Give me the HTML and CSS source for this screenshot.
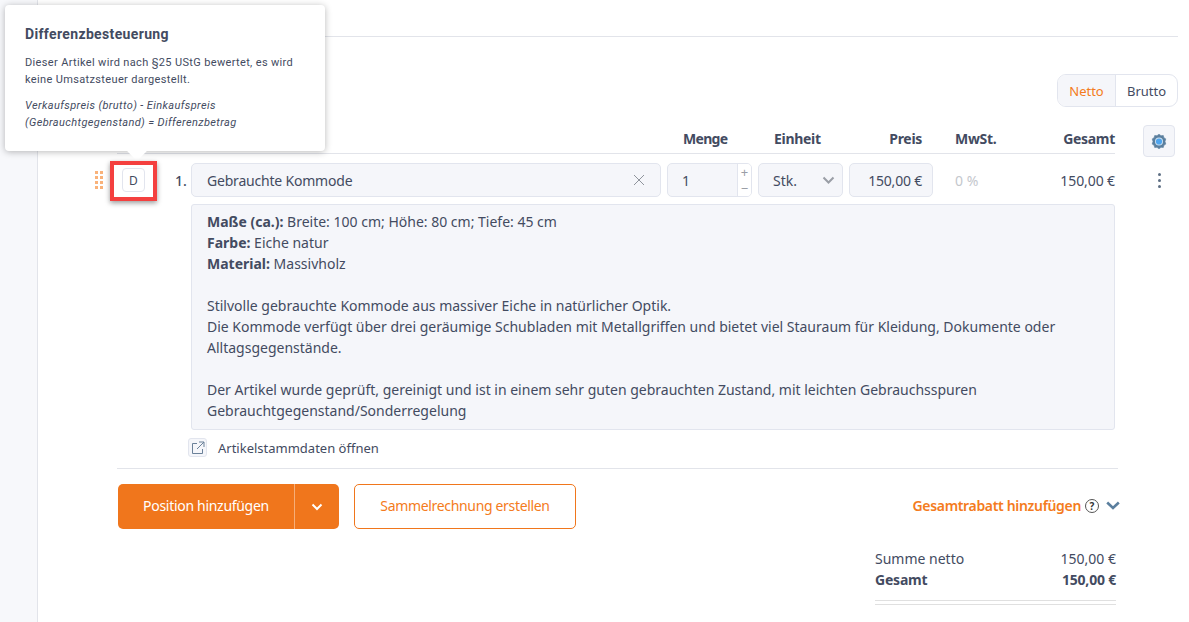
FILE: index.html
```html
<!DOCTYPE html>
<html lang="de">
<head>
<meta charset="utf-8">
<title>Differenzbesteuerung</title>
<link rel="stylesheet" href="styles.css">
</head>
<body>
<div class="page">
  <aside class="rail"></aside>
  <main class="main">
    <div class="topbar"></div>
    <div class="toggle-row">
      <div class="toggle"><span class="toggle-item active">Netto</span><span class="toggle-item">Brutto</span></div>
    </div>
    <div class="table">
      <div class="head">
        <div class="head-cols">
          <span class="c-lead"></span>
          <span class="c-name"></span>
          <span class="c-menge">Menge</span>
          <span class="c-einheit">Einheit</span>
          <span class="c-preis">Preis</span>
          <span class="c-mwst">MwSt.</span>
          <span class="c-gesamt">Gesamt</span>
        </div>
        <button class="gear" aria-label="Einstellungen">
          <svg width="16" height="17" viewBox="0 0 16 17"><path d="M8 1.200l2 1.500 2.300-.2.6 2.200 1.900 1.200-.8 2.600.8 2.600-1.900 1.200-.6 2.200-2.300-.2-2 1.500-2-1.500-2.300.2-.6-2.200-1.900-1.200.8-2.600-.8-2.600 1.900-1.200.6-2.200 2.300.2z" fill="#5b7f9e" stroke="#5b7f9e" stroke-width=".6" stroke-linejoin="round"/><circle cx="8" cy="8.500" r="4" fill="#cfe2f2"/><circle cx="8" cy="8.500" r="3.100" fill="#4fa5ee"/></svg>
        </button>
      </div>
      <div class="row">
        <div class="lead">
          <div class="grip"><i></i><i></i><i></i><i></i><i></i><i></i><i></i><i></i></div>
          <span class="d-badge">D</span>
          <span class="num">1.</span>
        </div>
        <div class="field name"><span>Gebrauchte Kommode</span>
          <svg width="12" height="12" viewBox="0 0 12 12"><path d="M1 1l10 10M11 1L1 11" stroke="#8f949c" stroke-width="1"/></svg>
        </div>
        <div class="field qty"><span>1</span>
          <div class="stepper"><span>+</span><span>−</span></div>
        </div>
        <div class="field unit"><span>Stk.</span>
          <svg width="13" height="8" viewBox="0 0 13 8"><path d="M1.500 1.500l5 5 5-5" fill="none" stroke="#9a9ea6" stroke-width="2"/></svg>
        </div>
        <div class="field price">150,00 €</div>
        <span class="vat">0 %</span>
        <span class="total">150,00 €</span>
        <div class="dots"><i></i><i></i><i></i></div>
      </div>
      <div class="desc">
        <p><b>Maße (ca.):</b> Breite: 100 cm; Höhe: 80 cm; Tiefe: 45 cm<br><b>Farbe:</b> Eiche natur<br><b>Material:</b> Massivholz</p>
        <p>Stilvolle gebrauchte Kommode aus massiver Eiche in natürlicher Optik.<br>Die Kommode verfügt über drei geräumige Schubladen mit Metallgriffen und bietet viel Stauraum für Kleidung, Dokumente oder Alltagsgegenstände.</p>
        <p>Der Artikel wurde geprüft, gereinigt und ist in einem sehr guten gebrauchten Zustand, mit leichten Gebrauchsspuren<br>Gebrauchtgegenstand/Sonderregelung</p>
      </div>
      <div class="master">
        <span class="ext">
          <svg width="14" height="14" viewBox="0 0 14 14"><path d="M6 2.500H1.500v10h10V8M8 1h5v5M13 1L6 8" fill="none" stroke="#6b8199" stroke-width="1"/></svg>
        </span>
        <span>Artikelstammdaten öffnen</span>
      </div>
    </div>
    <div class="actions">
      <div class="split">
        <span class="split-main">Position hinzufügen</span>
        <span class="split-caret"><svg width="12" height="8" viewBox="0 0 12 8"><path d="M1.500 1.500L6 6l4.500-4.500" fill="none" stroke="#fff" stroke-width="2"/></svg></span>
      </div>
      <span class="outline">Sammelrechnung erstellen</span>
      <div class="discount">
        <span>Gesamtrabatt hinzufügen</span>
        <span class="help">?</span>
        <svg class="disc-caret" width="14" height="9" viewBox="0 0 14 9"><path d="M1.200 1.500L7 7l5.800-5.500" fill="none" stroke="#5b7f9e" stroke-width="2.600"/></svg>
      </div>
    </div>
    <div class="sums">
      <div class="sum-line"><span>Summe netto</span><span>150,00 €</span></div>
      <div class="sum-line strong"><span>Gesamt</span><span>150,00 €</span></div>
      <div class="sum-rule"></div>
    </div>
  </main>
</div>
<div class="tooltip">
  <h3>Differenzbesteuerung</h3>
  <p>Dieser Artikel wird nach §25 UStG bewertet, es wird keine Umsatzsteuer dargestellt.</p>
  <p class="formula">Verkaufspreis (brutto) - Einkaufspreis (Gebrauchtgegenstand) = Differenzbetrag</p>
</div>
<div class="highlight"></div>
</body>
</html>
```
FILE: styles.css
```css
* { box-sizing: border-box; }
html, body { margin: 0; height: 100%; overflow: hidden; background: #fff; }
body { font-family: "Noto Sans", "Open Sans", sans-serif; font-size: 14px; color: #434b61; position: relative; }
.page { display: flex; height: 622px; }
.rail { width: 38px; flex: none; background: #f7f8fb; border-right: 1px solid #e2e4ea; }
.main { flex: 1; min-width: 0; padding-right: 11px; }
.topbar { height: 37px; border-bottom: 1px solid #e2e4ea; }
.toggle-row { display: flex; justify-content: flex-end; align-items: flex-start; padding-top: 37px; height: 88px; }
.toggle { display: flex; width: 121px; height: 33px; border: 1px solid #e2e5ee; border-radius: 9px; overflow: hidden; font-size: 13px; }
.toggle-item { flex: 1; display: flex; align-items: center; justify-content: center; }
.toggle-item.active { background: #f5f6fa; color: #f47b20; border-right: 1px solid #e2e5ee; flex: 0 0 58px; }
.table { padding-left: 79px; }
.head { display: flex; align-items: flex-start; height: 29px; }
.head-cols { display: flex; width: 998px; flex: none; height: 29px; border-bottom: 1px solid #e2e4ea; align-items: center; padding-bottom: 2px; font-weight: 700; font-size: 14px; letter-spacing: -.3px; white-space: nowrap; }
.c-lead { width: 74px; flex: none; }
.c-name { width: 470px; flex: none; }
.c-menge { width: 85px; margin-left: 6px; padding-left: 16px; flex: none; letter-spacing: -.7px; }
.c-einheit { width: 85px; margin-left: 6px; padding-left: 16px; flex: none; }
.c-preis { width: 84px; margin-left: 6px; padding-right: 11px; text-align: right; flex: none; }
.c-mwst { width: 40px; margin-left: 22px; flex: none; }
.c-gesamt { width: 120px; text-align: right; flex: none; }
.gear { margin-left: 28px; flex: none; width: 32px; height: 32px; padding: 0; background: #f5f6fa; border: 1px solid #e2e5ee; border-radius: 4px; display: flex; align-items: center; justify-content: center; }
.row { display: flex; align-items: center; height: 50px; padding-top: 2px; }
.lead { width: 74px; flex: none; display: flex; align-items: center; }
.grip { width: 9px; margin-left: -22px; margin-right: 18px; display: grid; grid-template-columns: 3px 3px; gap: 2px 2px; flex: none; }
.grip i { width: 3px; height: 3px; background: #f9b27a; display: block; }
.d-badge { width: 23px; height: 24px; flex: none; border: 1px solid #e2e5ee; border-radius: 4px; display: flex; align-items: center; justify-content: center; font-size: 12px; }
.num { margin-left: 30px; flex: none; font-size: 14px; font-weight: 500; }
.field { height: 34px; flex: none; background: #f5f6fa; border: 1px solid #e2e5ee; border-radius: 5px; display: flex; align-items: center; font-size: 14px; }
.name { width: 470px; padding: 0 15px; justify-content: space-between; letter-spacing: -.2px; }
.qty { width: 85px; margin-left: 6px; padding-left: 14px; justify-content: space-between; }
.stepper { width: 14px; height: 32px; border-left: 1px solid #e2e5ee; background: #fff; border-radius: 0 4px 4px 0; display: flex; flex-direction: column; align-items: center; justify-content: space-between; color: #9a9ea6; font-size: 13px; line-height: 16px; }
.unit { width: 85px; margin-left: 6px; padding: 0 7px 0 14px; justify-content: space-between; }
.price { width: 84px; margin-left: 6px; padding-right: 10px; justify-content: flex-end; letter-spacing: -.2px; }
.vat { width: 40px; margin-left: 22px; color: #c4c7cd; flex: none; }
.total { width: 120px; text-align: right; flex: none; white-space: nowrap; letter-spacing: -.1px; }
.dots { margin-left: 43px; display: flex; flex-direction: column; gap: 3px; flex: none; }
.dots i { width: 3px; height: 3px; border-radius: 50%; background: #5e6f84; display: block; }
.desc { margin-left: 74px; width: 924px; height: 226px; background: #f5f6fa; border: 1px solid #e2e5ee; border-radius: 3px; padding: 6px 15px; font-size: 14px; line-height: 21px; }
.desc p { margin: 0 0 21px; }
.desc p:last-child { margin: 0; }
.master { margin-left: 71px; display: flex; align-items: center; gap: 11px; height: 38px; padding-bottom: 3px; font-size: 13px; }
.ext { width: 19px; height: 19px; border: 1px solid #e2e5ee; background: #f5f6fa; border-radius: 3px; display: flex; align-items: center; justify-content: center; }
.actions { margin-left: 79px; width: 1001px; border-top: 1px solid #e2e4ea; padding: 15px 0 0 1px; display: flex; align-items: flex-start; }
.split { display: flex; width: 221px; height: 45px; background: #f0761c; border-radius: 5px; color: #fff; font-size: 14px; letter-spacing: -.3px; align-items: center; }
.split-main { width: 177px; height: 100%; display: flex; align-items: center; justify-content: center; padding-bottom: 2px; border-right: 1px solid #f6ae78; }
.split-caret { flex: 1; display: flex; align-items: center; justify-content: center; }
.outline { margin-left: 15px; width: 222px; height: 45px; border: 1px solid #f0761c; border-radius: 5px; color: #f47b20; font-size: 14px; letter-spacing: -.33px; padding-bottom: 2px; display: flex; align-items: center; justify-content: center; }
.discount { margin-left: auto; margin-right: -2px; display: flex; align-items: center; height: 45px; padding-bottom: 2px; color: #f47b20; font-weight: 600; font-size: 14px; gap: 4px; letter-spacing: -.33px; }
.help { width: 14px; height: 14px; border: 1px solid #555; border-radius: 50%; color: #333; font-size: 10px; font-weight: 700; display: flex; align-items: center; justify-content: center; letter-spacing: 0; }
.disc-caret { margin-left: 3px; }
.sums { margin-left: 837px; width: 241px; margin-top: 19px; font-size: 14px; }
.sum-line { display: flex; justify-content: space-between; height: 21px; align-items: center; }
.sum-line.strong { font-weight: 700; letter-spacing: -.2px; }
.sum-rule { margin-top: 10px; height: 5px; border-top: 1px solid #e0e0e0; border-bottom: 1px solid #e0e0e0; }
.tooltip { position: absolute; left: 5px; top: 5px; width: 320px; height: 146px; background: #fff; border-radius: 4px; box-shadow: 0 1px 7px rgba(0,0,0,.28); padding: 20px; font-family: Roboto, sans-serif; font-size: 11px; line-height: 17px; letter-spacing: .35px; color: #434b61; }
.tooltip::after { content: ""; position: absolute; left: 125px; bottom: -7px; width: 14px; height: 14px; background: #fff; transform: rotate(45deg); }
.tooltip h3 { margin: 0 0 11px; font-size: 14px; line-height: 18px; font-weight: 700; letter-spacing: .35px; }
.tooltip p { margin: 0 0 9px; }
.tooltip .formula { font-style: italic; letter-spacing: .38px; }
.highlight { position: absolute; left: 110px; top: 161px; width: 47px; height: 40px; border: 4px solid #f4403f; box-shadow: 0 2px 5px rgba(0,0,0,.4); }
```
